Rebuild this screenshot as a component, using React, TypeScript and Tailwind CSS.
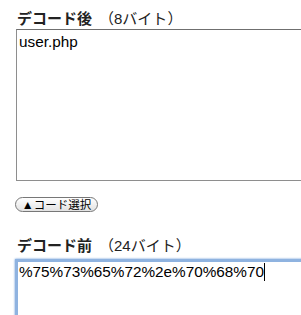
import React from 'react';

const font = { fontFamily: '"Liberation Sans", "Noto Sans CJK JP", sans-serif' };

const Heading: React.FC<{ title: string; size: string }> = ({ title, size }) => (
    <h3 className="text-[15px] leading-[18px] text-[#222] pl-[17px]">
        <span className="font-bold">{title}</span>
        <span className="ml-[7px]">（{size}）</span>
    </h3>
);

const App: React.FC = () => {
    return (
        <div className="w-[301px] h-[315px] overflow-hidden bg-white" style={font}>
            <div className="pt-[10px]">
                <Heading title="デコード後" size="8バイト" />
                <div className="mt-[1px] ml-[16px] w-[320px] h-[152px] border border-[#8e8e8e] border-t-[#6f6f6f] px-[2px] py-[3px] text-[15.3px] leading-[18px] text-black">
                    user.php
                </div>
                <button className="mt-[16px] ml-[15px] h-[15px] w-[83px] rounded-full border border-[#777] bg-gradient-to-b from-white to-[#e2e2e2] text-[11.5px] leading-[12px] text-black flex items-center justify-center">
                    <span className="text-[12px] leading-[12px]">▲</span>
                    <span>コード選択</span>
                </button>
                <div className="mt-[25px]">
                    <Heading title="デコード前" size="24バイト" />
                </div>
                <div className="mt-[4px] ml-[15px] w-[320px] h-[80px] border-[3px] border-[#8fb3e0] shadow-[0_0_2px_#5e91d6] px-[1px] py-[1px] text-[15.3px] leading-[18px] text-black">
                    %75%73%65%72%2e%70%68%70<span className="inline-block w-px h-[18px] bg-black align-top"></span>
                </div>
            </div>
        </div>
    );
};

export default App;
